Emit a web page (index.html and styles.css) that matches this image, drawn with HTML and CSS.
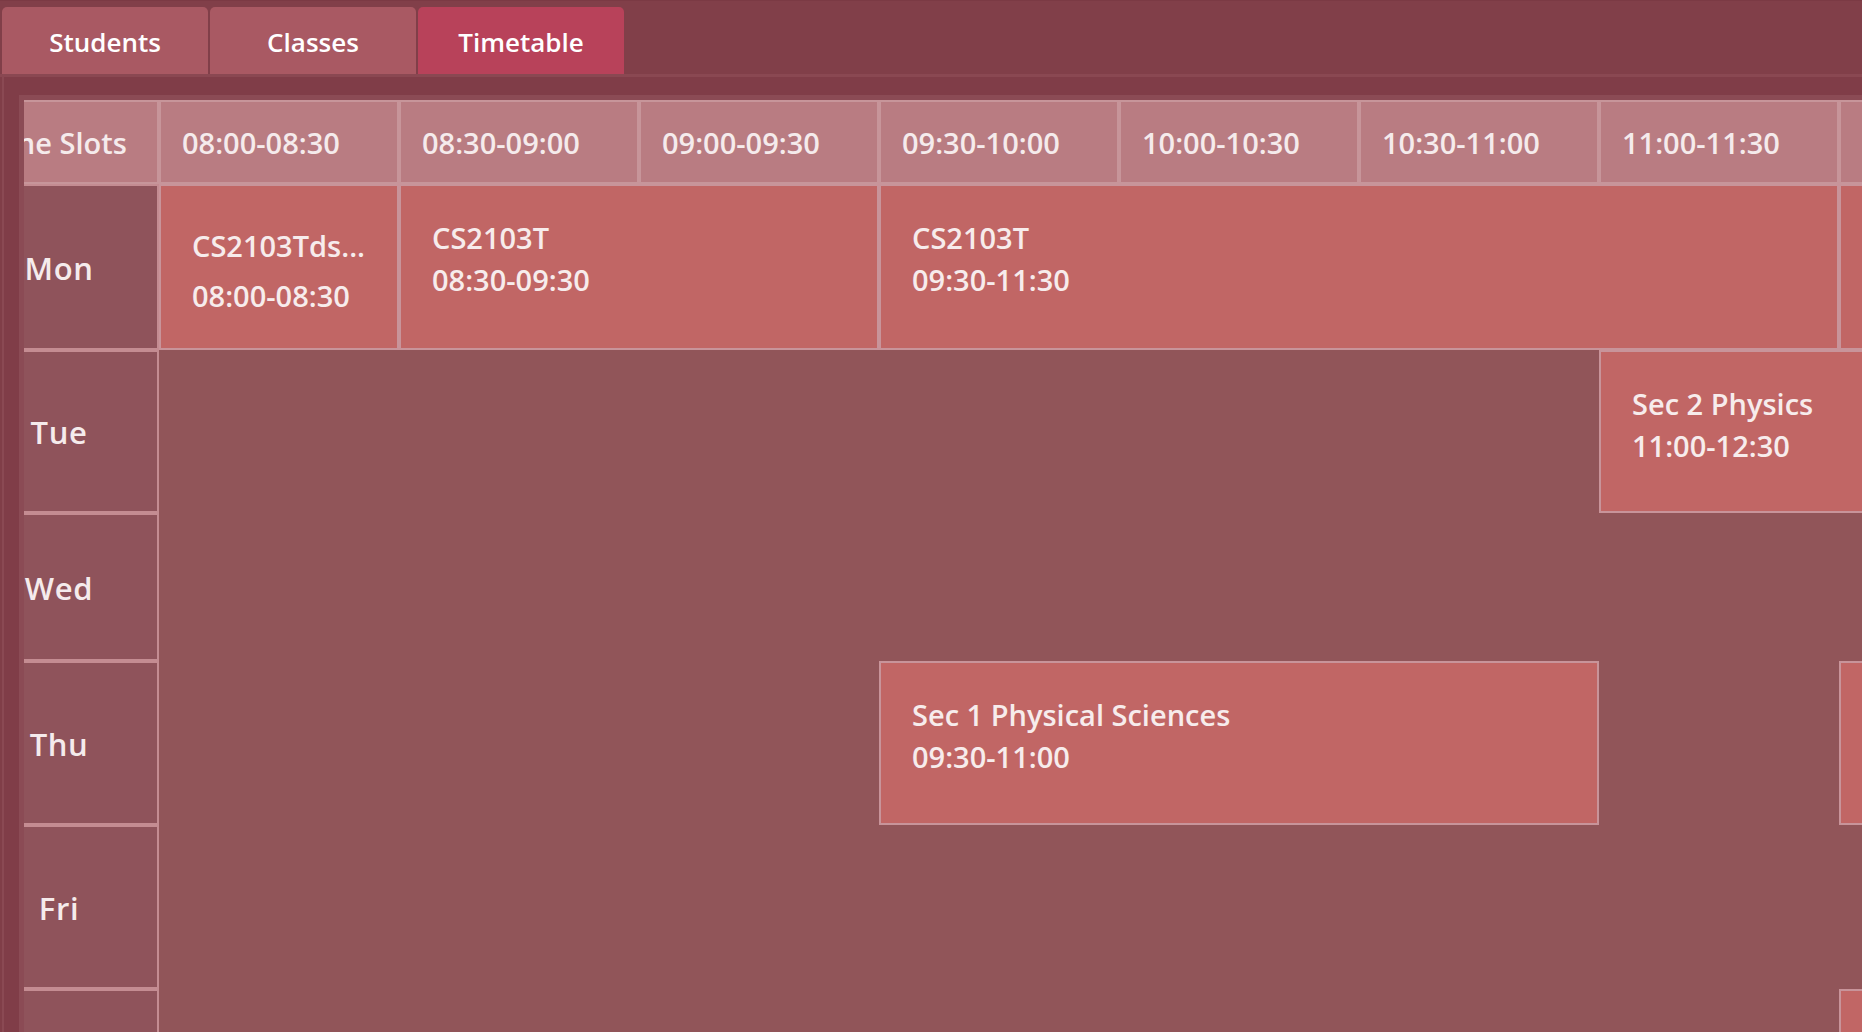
FILE: index.html
```html
<!DOCTYPE html>
<html lang="en">
<head>
<meta charset="utf-8">
<title>Timetable</title>
<link rel="stylesheet" href="styles.css">
</head>
<body>
<div class="app">
  <div class="tabbar">
    <div class="tab">Students</div>
    <div class="tab">Classes</div>
    <div class="tab active">Timetable</div>
  </div>
  <div class="pane">
    <div class="frame">
      <div class="viewport">
        <div class="grid">
          <div class="hcell corner">Time Slots</div>
          <div class="hcell">08:00-08:30</div>
          <div class="hcell">08:30-09:00</div>
          <div class="hcell">09:00-09:30</div>
          <div class="hcell">09:30-10:00</div>
          <div class="hcell">10:00-10:30</div>
          <div class="hcell">10:30-11:00</div>
          <div class="hcell">11:00-11:30</div>
          <div class="hcell">11:30-12:00</div>
          <div class="hcell">12:00-12:30</div>
          <div class="hcell">12:30-13:00</div>

          <div class="day r-mon">Mon</div>
          <div class="day r-tue">Tue</div>
          <div class="day r-wed">Wed</div>
          <div class="day r-thu">Thu</div>
          <div class="day r-fri">Fri</div>
          <div class="day r-sat">Sat</div>

          <div class="event tight r-mon c-2 s-1"><div>CS2103Tds...</div><div>08:00-08:30</div></div>
          <div class="event r-mon c-3 s-2"><div>CS2103T</div><div>08:30-09:30</div></div>
          <div class="event r-mon c-5 s-4"><div>CS2103T</div><div>09:30-11:30</div></div>
          <div class="event r-mon c-9 s-2"></div>

          <div class="event r-tue c-8 s-3"><div>Sec 2 Physics</div><div>11:00-12:30</div></div>

          <div class="event r-thu c-5 s-3"><div>Sec 1 Physical Sciences</div><div>09:30-11:00</div></div>
          <div class="event r-thu c-9 s-2"></div>

          <div class="event r-sat c-9 s-2"></div>
        </div>
      </div>
    </div>
  </div>
</div>
</body>
</html>
```

FILE: styles.css
```css
html, body {
  margin: 0;
  padding: 0;
}

body {
  width: 1862px;
  height: 1032px;
  overflow: hidden;
  background: #803e48;
  font-family: "Open Sans", "Noto Sans", "DejaVu Sans", sans-serif;
}

.app {
  display: flex;
  flex-direction: column;
  height: 1032px;
}

.tabbar {
  display: flex;
  gap: 2px;
  height: 77px;
  box-sizing: border-box;
  padding: 6px 0 0 2px;
  border-top: 1px solid #7b3a44;
  border-bottom: 3px solid #8a4852;
  background: #813f49;
}

.tab {
  width: 206px;
  height: 67px;
  box-sizing: border-box;
  border-radius: 5px 5px 0 0;
  background: #a95963;
  color: #ffffff;
  font-size: 26px;
  font-weight: 600;
  display: flex;
  align-items: center;
  justify-content: center;
  padding-top: 3px;
}

.tab.active {
  background: #b8425a;
}

.pane {
  flex: 1;
  min-height: 0;
  display: flex;
  margin-left: 2px;
  border-left: 2px solid #8a4953;
  padding: 18px 0 0 15px;
  background: #803d48;
}

.frame {
  flex: 1;
  min-width: 0;
  display: flex;
  border-top: 5px solid #8b4b55;
  border-left: 5px solid #8b4b55;
}

.viewport {
  flex: 1;
  min-width: 0;
  overflow: hidden;
}

.grid {
  display: grid;
  grid-template-columns: 200px repeat(10, 240px);
  grid-template-rows: 84px 166px 163px 148px 164px 164px 164px;
  width: max-content;
  margin-left: -65px;
  background: #915559;
  color: #f5ebec;
  font-size: 29px;
  font-weight: 600;
}

.hcell {
  box-sizing: border-box;
  background: #b97c82;
  border: 2px solid #c7959a;
  display: flex;
  align-items: center;
  padding-left: 21px;
  white-space: nowrap;
  overflow: hidden;
}

.hcell.corner {
  justify-content: center;
  padding: 0 8px 0 0;
}

.day {
  grid-column: 1;
  box-sizing: border-box;
  background: #8f535b;
  border: 2px solid #c48c92;
  display: flex;
  align-items: center;
  justify-content: center;
  padding-top: 1px;
  font-size: 31px;
  letter-spacing: 0.6px;
}

.event {
  box-sizing: border-box;
  background: #c16665;
  border: 2px solid #c8949a;
  padding: 31px 0 0 31px;
  line-height: 42px;
  white-space: nowrap;
  overflow: hidden;
  color: #f7ecec;
}

.event.tight {
  line-height: 50px;
  padding-top: 35px;
}

.r-mon { grid-row: 2; }
.r-tue { grid-row: 3; }
.r-wed { grid-row: 4; }
.r-thu { grid-row: 5; }
.r-fri { grid-row: 6; }
.r-sat { grid-row: 7; }

.c-2 { grid-column-start: 2; }
.c-3 { grid-column-start: 3; }
.c-5 { grid-column-start: 5; }
.c-8 { grid-column-start: 8; }
.c-9 { grid-column-start: 9; }

.s-1 { grid-column-end: span 1; }
.s-2 { grid-column-end: span 2; }
.s-3 { grid-column-end: span 3; }
.s-4 { grid-column-end: span 4; }
```
